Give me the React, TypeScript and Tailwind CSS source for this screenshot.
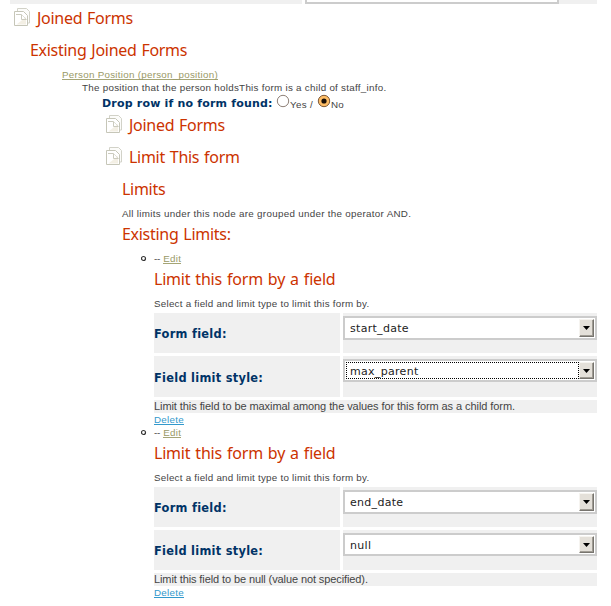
import type { ReactNode } from "react";

function PagesIcon() {
  return (
    <svg width="17" height="18" viewBox="0 0 17 18" fill="none" className="shrink-0">
      <path d="M3.500 .5h9l3 3v11.500h-12z" fill="#fcfcfa" stroke="#d2d2c8" />
      <path d="M.5 3.500h9l4 4v10h-13z" fill="#ffffff" stroke="#c6c6b8" />
      <path d="M12 9v7.500h-9.500z" fill="#f3efe4" />
      <path d="M2 6.500h5.500v5h5" stroke="#cbcbbe" />
      <path d="M7.500 6.500l5 5" stroke="#d8d8cc" strokeWidth=".8" />
    </svg>
  );
}

function Heading({ children, className = "" }: { children: ReactNode; className?: string }) {
  return (
    <h3
      className={`whitespace-nowrap font-['Noto_Sans',sans-serif] text-[16px] leading-6 font-normal text-[#cc3300] [word-spacing:1px] ${className}`}
    >
      {children}
    </h3>
  );
}

function IconHeading({ children }: { children: ReactNode }) {
  return (
    <div className="flex h-6 gap-1.5">
      <div className="pt-0.5">
        <PagesIcon />
      </div>
      <Heading className="tracking-[-0.29px]">{children}</Heading>
    </div>
  );
}

function SelectBox({ value, focused, short }: { value: string; focused?: boolean; short?: boolean }) {
  return (
    <div
      className={`flex w-[254px] border-2 border-[#cccccc] bg-white p-px ${short ? "h-[23px]" : "h-6"}`}
    >
      <div
        className={`flex flex-1 border pl-[3px] font-['DejaVu_Sans',sans-serif] text-[11px] leading-[17px] tracking-[0.3px] text-[#222222] ${
          focused ? "border-dotted border-black" : "border-transparent"
        }`}
      >
        {value}
      </div>
      <div className="flex w-[15px] justify-center border border-t-[#f6f4f0] border-r-[#77746e] border-b-[#77746e] border-l-[#f6f4f0] bg-[#e4e0d9] shadow-[inset_-1px_-1px_0_#a09c94]">
        <svg width="7" height="4" viewBox="0 0 7 4" className="mt-1.5">
          <path d="M0 0h7L3.500 4z" fill="#000" />
        </svg>
      </div>
    </div>
  );
}

function FieldRow({
  label,
  value,
  focused,
  short,
  tall,
}: {
  label: string;
  value: string;
  focused?: boolean;
  short?: boolean;
  tall?: boolean;
}) {
  return (
    <div className={`flex gap-[3px] ${tall ? "h-[41px]" : "h-10"}`}>
      <div
        className={`w-[186px] bg-[#f0f0f0] font-['DejaVu_Sans',sans-serif] text-[11.4px] leading-[14px] font-bold tracking-[0.27px] whitespace-nowrap text-[#003366] ${
          tall ? "pt-[15px]" : "pt-3.5"
        }`}
      >
        {label}
      </div>
      <div className="w-[254px] bg-[#f0f0f0] pt-[3px]">
        <SelectBox value={value} focused={focused} short={short} />
      </div>
    </div>
  );
}

function LimitItem({
  field,
  style,
  note,
  noteClass,
  focused,
}: {
  field: string;
  style: string;
  note: string;
  noteClass: string;
  focused?: boolean;
}) {
  return (
    <li className="flex">
      <svg width="13" height="12" viewBox="0 0 13 12" className="shrink-0">
        <circle cx="2.500" cy="6.500" r="2" fill="none" stroke="#333" strokeWidth="1.2" />
      </svg>
      <div className="w-[443px]">
        <div className="flex h-[15px] gap-[3px] leading-[13px]">
          <span className="tracking-[-0.2px]">--</span>
          <a className="h-3 border-b border-[#a5a575] text-[#999966]">Edit</a>
        </div>
        <Heading className="tracking-[-0.2px]">Limit this form by a field</Heading>
        <p className="mt-1.5 h-4 leading-[13px] tracking-[0.24px]">
          Select a field and limit type to limit this form by.
        </p>
        <div className="flex flex-col gap-[3px]">
          <FieldRow label="Form field:" value={field} />
          <FieldRow label="Field limit style:" value={style} focused={focused} tall={focused} short />
          <div className={`h-[13px] bg-[#f0f0f0] text-[11px] leading-[13px] ${noteClass}`}>{note}</div>
        </div>
        <div className="flex h-[13px] leading-[13px]">
          <a className="h-3 border-b border-[#3399cc] text-[#3399cc]">Delete</a>
        </div>
      </div>
    </li>
  );
}

export default function App() {
  return (
    <div className="h-[606px] w-[611px] overflow-hidden bg-white font-['Liberation_Sans',Arial,sans-serif] text-[9.8px] tracking-[0.3px] whitespace-nowrap text-[#444444]">
      <div className="flex h-1 gap-[3px] pl-2.5">
        <div className="w-[292px] bg-[#f0f0f0]" />
        <div className="w-[292px] bg-[#f0f0f0]">
          <div className="h-1 w-[254px] border-2 border-t-0 border-[#cccccc] bg-white" />
        </div>
      </div>

      <div className="mt-0.5 pl-3.5">
        <IconHeading>Joined Forms</IconHeading>
      </div>
      <Heading className="mt-2 ml-[30px] tracking-[-0.29px]">Existing Joined Forms</Heading>

      <div className="mt-1.5 flex h-[13px] pl-[62px] leading-[13px]">
        <a className="h-3 border-b border-[#a5a575] tracking-[0.27px] text-[#999966]">
          Person Position (person_position)
        </a>
      </div>
      <p className="h-[13px] pl-[82px] leading-[13px] tracking-[0.28px]">
        The position that the person holdsThis form is a child of staff_info.
      </p>

      <div className="flex h-[19px] pl-[102px]">
        <b className="w-[174px] pt-[3px] font-['DejaVu_Sans',sans-serif] text-[11px] leading-[14px] tracking-[0.19px] text-[#003366]">
          Drop row if no form found:
        </b>
        <svg width="14" height="14" viewBox="0 0 14 14">
          <circle cx="7" cy="7" r="5.700" fill="#fff" stroke="#8f8178" />
        </svg>
        <span className="w-[27px] pt-1 leading-[13px]">Yes /</span>
        <svg width="14" height="14" viewBox="0 0 14 14">
          <circle cx="7" cy="7" r="5.700" fill="#ffbe66" stroke="#7d5a3a" />
          <circle cx="7" cy="7" r="2.600" fill="#1a1008" />
        </svg>
        <span className="pt-1 leading-[13px]">No</span>
      </div>

      <div className="flex flex-col gap-2 pl-[106px]">
        <IconHeading>Joined Forms</IconHeading>
        <IconHeading>Limit This form</IconHeading>
      </div>

      <div className="mt-2 pl-[122px]">
        <Heading className="tracking-[-0.3px]">Limits</Heading>
        <p className="mt-1.5 leading-[13px]">
          All limits under this node are grouped under the operator AND.
        </p>
        <Heading className="mt-0.5 tracking-[-0.29px]">Existing Limits:</Heading>
        <ul className="mt-1.5 pl-[19px]">
          <LimitItem
            field="start_date"
            style="max_parent"
            note="Limit this field to be maximal among the values for this form as a child form."
            noteClass="tracking-[-0.075px]"
            focused
          />
          <LimitItem
            field="end_date"
            style="null"
            note="Limit this field to be null (value not specified)."
            noteClass="tracking-[-0.1px]"
          />
        </ul>
      </div>
    </div>
  );
}
